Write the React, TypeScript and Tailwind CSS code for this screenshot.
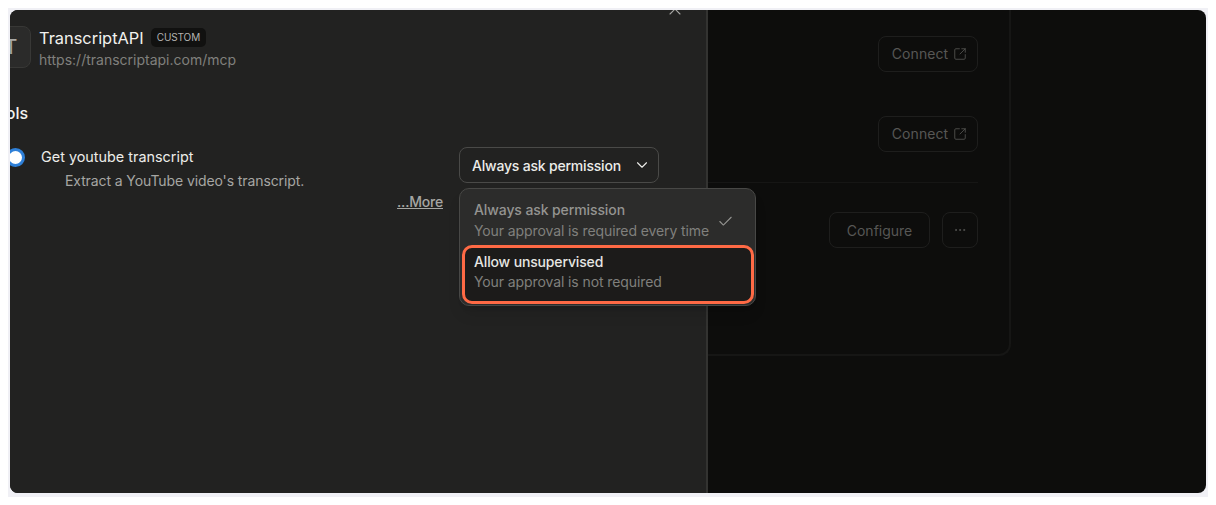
import React from "react";
import { Check, ChevronDown, Ellipsis, SquareArrowOutUpRight, X } from "lucide-react";

const Ghost = ({ children, className = "" }: { children: React.ReactNode; className?: string }) => (
  <div className={`flex h-9 items-center justify-center rounded-[8px] border border-[#1e1e1d] text-[14px] text-[#575755] ${className}`}>
    {children}
  </div>
);

const Connect = () => (
  <Ghost className="w-[100px] gap-[5px] pl-[3px]">
    <span className="mt-[-2px] tracking-[0.1px]">Connect</span>
    <SquareArrowOutUpRight size={14} strokeWidth={1.4} className="mt-[-1px]" />
  </Ghost>
);

export default function App() {
  return (
    <div className="h-[505px] w-[1216px] overflow-hidden bg-white pl-[8px] pr-[8px] pt-[8px] font-['Inter',sans-serif]">
      <div className="h-[489px] w-[1200px] bg-[#f0f0f5] pb-[3px] pl-[2px] pr-[2px] pt-[2px]">
        <div className="relative flex h-[483px] w-[1196px] overflow-hidden rounded-[8px] bg-[#0d0d0c]">
          <div className="relative z-10 h-full w-[698px] shrink-0 border-r-2 border-[#333331] bg-[#222221]">
            <X size={20} strokeWidth={1.3} className="absolute left-[655px] top-[-11px] text-[#a3a3a0]" />

            <div className="ml-[-14px] flex items-start gap-[8px] pt-[16px]">
              <div className="flex h-[42px] w-[35px] items-center justify-center rounded-[8px] border border-[#383836] bg-[#2b2b2a] pr-[5px] text-[20px] text-[#a9a9a6]">
                T
              </div>
              <div className="mt-[1px]">
                <div className="flex items-center gap-[7px]">
                  <span className="text-[16.4px] leading-[22px] text-[#f2f2ef]">TranscriptAPI</span>
                  <span className="mt-[-1px] rounded-[5px] bg-[#111110] px-[6px] py-[3px] text-[10px] leading-[13px] tracking-[-0.1px] text-[#b3b3b0]">CUSTOM</span>
                </div>
                <div className="mt-[1px] text-[14px] leading-[20px] text-[#80807d]">https://transcriptapi.com/mcp</div>
              </div>
            </div>

            <div className="ml-[-23px] mt-[32px] text-[16px] font-medium leading-[22px] text-[#f2f2ef]">Tools</div>

            <div className="relative mt-[23px] flex">
              <div className="ml-[-4px] mt-[1px] h-[19px] w-[19px] shrink-0 rounded-full border-[3px] border-[#2f80d8] bg-white" />
              <div className="ml-[16px] w-[402px]">
                <div className="text-[14.4px] leading-[20px] text-[#ecece9]">Get youtube transcript</div>
                <div className="ml-[24px] mt-[4px] text-[14px] leading-[20px] tracking-[-0.1px] text-[#a6a6a3]">Extract a YouTube video's transcript.</div>
                <div className="mt-[1px] text-right text-[14px] font-medium leading-[20px] tracking-[-0.2px] text-[#a6a6a3] underline">...More</div>
              </div>
              <div className="ml-[16px]">
                <div className="flex h-[36px] w-[200px] items-center justify-between rounded-[8px] border border-[#4a4a48] pl-[12px] pr-[7px] text-[14px] font-medium tracking-[-0.2px] text-[#ecece9]">
                  Always ask permission
                  <ChevronDown size={18} strokeWidth={1.5} />
                </div>
              </div>
            </div>
          </div>

          <div className="relative z-0 flex-1">
            <div className="ml-[-40px] h-[346px] w-[343px] rounded-br-[12px] border-b-2 border-r-2 border-[#161615]">
              <div className="flex flex-col items-end pr-[31px] pt-[26px]">
                <Connect />
                <div className="mt-[44px]"><Connect /></div>
                <div className="mt-[30px] h-px w-[280px] bg-[#161615]" />
                <div className="mt-[29px] flex gap-[12px]">
                  <Ghost className="w-[101px]">Configure</Ghost>
                  <Ghost className="w-[36px]"><Ellipsis size={14} strokeWidth={1.5} /></Ghost>
                </div>
              </div>
            </div>
          </div>

          <div className="absolute left-[449px] top-[178px] z-20 h-[118px] w-[297px] rounded-[10px] border border-[#484846] bg-[#2c2c2b] py-[2px] pl-[2px] pr-[1px] shadow-lg">
            <div className="relative h-[54px] pl-[12px] pt-[9px]">
              <div className="text-[14px] font-medium leading-[20px] tracking-[-0.1px] text-[#949491]">Always ask permission</div>
              <div className="text-[14px] leading-[21px] tracking-[-0.1px] text-[#80807d]">Your approval is required every time</div>
              <Check size={17} strokeWidth={1.5} className="absolute left-[255px] top-[22px] text-[#949491]" />
            </div>
            <div className="h-[59px] rounded-[10px] border-[3px] border-[#ff6a45] bg-[#1c1b1a] pl-[9px] pt-[4px]">
              <div className="text-[14px] font-medium leading-[20px] tracking-[-0.15px] text-[#e6e6e3]">Allow unsupervised</div>
              <div className="text-[14px] leading-[20px] tracking-[-0.1px] text-[#80807d]">Your approval is not required</div>
            </div>
          </div>
        </div>
      </div>
    </div>
  );
}
